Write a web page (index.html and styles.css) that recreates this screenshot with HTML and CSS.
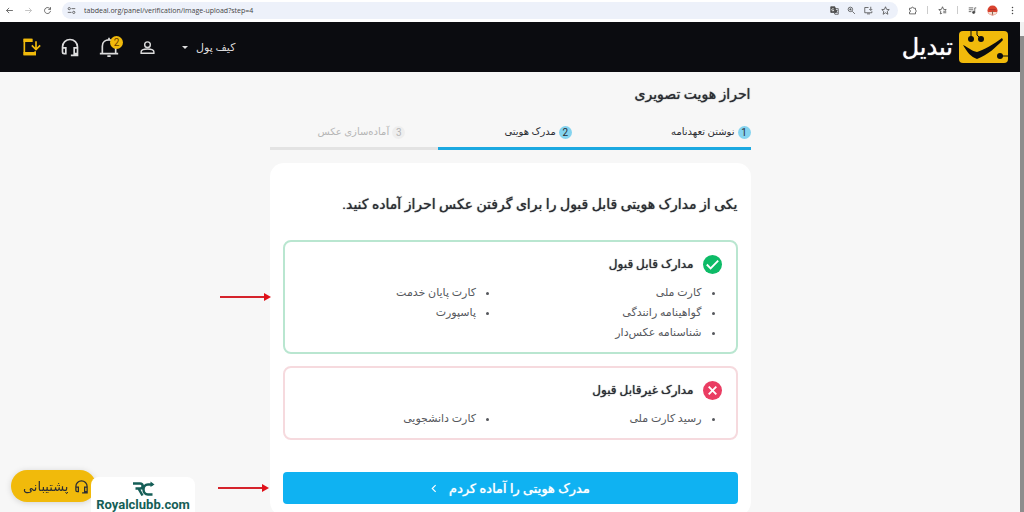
FILE: index.html
```html
<!DOCTYPE html>
<html lang="fa">
<head>
    <meta charset="UTF-8">
    <meta name="viewport" content="width=device-width, initial-scale=1.0">
    <title>احراز هویت تصویری</title>
    <link rel="stylesheet" href="styles.css">
</head>
<body>
    <div class="browser-bar">
        <button class="tool" aria-label="Back"><svg viewBox="0 0 24 24"><path d="M21 12H4M11 5l-7 7 7 7"/></svg></button>
        <button class="tool tool-off" aria-label="Forward"><svg viewBox="0 0 24 24"><path d="M3 12h17M13 5l7 7-7 7"/></svg></button>
        <button class="tool" aria-label="Reload"><svg viewBox="0 0 24 24"><path d="M20 13a8 8 0 1 1-2.500-6.800L20 8.500M20 3v6h-6"/></svg></button>
        <div class="address">
            <svg class="site-icon" viewBox="0 0 24 24"><circle cx="6" cy="7" r="3"/><path d="M12 7h10M2 17h10"/><circle cx="18" cy="17" r="3"/></svg>
            <input class="url" type="text" aria-label="Address" value="tabdeal.org/panel/verification/image-upload?step=4">
            <button class="tool" aria-label="Translate"><svg viewBox="0 0 24 24"><path d="M2 2h11l4 15H2z" fill="#555"/><path d="M12 7h10v15h-9l-2-5M15 12h5M17.500 11v2c0 3-2 5-3 5M16 14l4 4"/><path d="M10 8a3 3 0 1 0 0 4H8" stroke="#fff"/></svg></button>
            <button class="tool" aria-label="Zoom"><svg viewBox="0 0 24 24"><circle cx="9" cy="9" r="6"/><path d="M14 14l7 7M6 9h6M9 6v6"/></svg></button>
            <button class="tool" aria-label="Install"><svg viewBox="0 0 24 24"><path d="M12 4H2v14h19v-4M8 21h8M18 2v9M14 8l4 4 4-4"/></svg></button>
            <button class="tool" aria-label="Bookmark"><svg viewBox="0 0 24 24"><path d="M12 2l3 7 7 .6-5.300 4.700L18.300 22 12 18l-6.300 4 1.600-7.700L2 9.600 9 9z"/></svg></button>
        </div>
        <button class="tool" aria-label="Extensions"><svg viewBox="0 0 24 24"><path d="M4 6h5c0-4 6-4 6 0h5v5c3 0 3 5 0 5v5H4v-5c4 0 4-5 0-5z"/></svg></button>
        <span class="divider"></span>
        <button class="tool" aria-label="Favourites"><svg viewBox="0 0 24 24"><path d="M11 19l-5 2 1.500-7L2 9.600 9 9l3-7 3 7 7 .6-3 2.400M14 14h8M14 18h8"/></svg></button>
        <span class="divider"></span>
        <button class="tool" aria-label="Media"><svg viewBox="0 0 24 24"><path d="M2 5h12M2 10h12M2 15h7M18 17V5h4"/><circle cx="15" cy="17" r="3" fill="#444"/></svg></button>
        <button class="tool" aria-label="Profile"><svg class="avatar" viewBox="0 0 24 24"><circle cx="12" cy="12" r="11" fill="#d9432f" stroke="none"/><path d="M2 15h20l-4 6H6z" fill="#f3ddd0" stroke="none"/><path d="M5 10h14" stroke="#b02a22"/><path d="M12 13v8" stroke="#8a5b45"/></svg></button>
        <button class="tool" aria-label="Menu"><svg viewBox="0 0 24 24"><g fill="#444" stroke="none"><circle cx="12" cy="4" r="2"/><circle cx="12" cy="12" r="2"/><circle cx="12" cy="20" r="2"/></g></svg></button>
    </div>

    <div class="viewport">
        <div class="page" dir="rtl">
            <header class="navbar">
                <a class="logo" href="#">
                    <svg class="logo-mark" viewBox="0 0 49 32">
                        <rect width="49" height="32" rx="4" fill="#f1ba0b"/>
                        <g fill="#0b0c10">
                            <circle cx="12" cy="8" r="3"/>
                            <circle cx="22" cy="8" r="3"/>
                            <circle cx="41" cy="25" r="3"/>
                            <path d="M4 14c6 3 9 6 14 7 7-2 17-8 25-14l1 2C37 16 29 24 18 28 12 26 8 21 4 14z"/>
                        </g>
                        <path d="M12 8V0M22 8l-4-4V0M41 25h8" fill="none" stroke="#0b0c10"/>
                    </svg>
                    <span class="logo-text">تبدیل</span>
                </a>
                <nav class="nav-actions">
                    <button class="wallet">کیف پول <span class="caret"></span></button>
                    <a class="nav-icon" href="#" aria-label="حساب کاربری"><svg class="small" viewBox="0 0 24 24"><circle cx="12" cy="8" r="4"/><path d="M3 20v-2c0-3 6-4 9-4s9 1 9 4v2z"/></svg></a>
                    <a class="nav-icon" href="#" aria-label="اعلان‌ها"><svg viewBox="0 0 24 24"><path d="M1 20h22M4 20v-9c0-10 16-10 16 0v9M12 1v3M10 23h4"/></svg><span class="badge">2</span></a>
                    <a class="nav-icon" href="#" aria-label="پشتیبانی"><svg viewBox="0 0 24 24"><path d="M3 18v-6a9 9 0 0 1 18 0v10h-8M3 13h4v7H5a2 2 0 0 1-2-2zM21 13h-4v7h4"/></svg></a>
                    <a class="nav-icon nav-app" href="#" aria-label="دریافت اپلیکیشن"><svg viewBox="0 0 24 24"><path d="M13 3H4v18h13v-4"/><path d="M3 2h11v4H3zM3 18h15v4H3z" fill="#f1ba0b" stroke="none"/><path d="M18 5v9M13 10l5 5 5-5"/></svg></a>
                </nav>
            </header>

            <main class="content">
                <h1>احراز هویت تصویری</h1>
                <ol class="steps">
                    <li><span class="step-number">1</span>نوشتن تعهدنامه</li>
                    <li><span class="step-number">2</span>مدرک هویتی</li>
                    <li class="pending"><span class="step-number">3</span>آماده‌سازی عکس</li>
                </ol>
                <div class="progress"><div class="progress-fill"></div></div>

                <section class="card">
                    <h2>یکی از مدارک هویتی قابل قبول را برای گرفتن عکس احراز آماده کنید.</h2>

                    <div class="documents accepted">
                        <svg class="arrow" viewBox="0 0 51 8"><path d="M0 4h45" stroke="#d5232b" stroke-width="2"/><path d="M44 0l7 4-7 4z" fill="#e01019"/></svg>
                        <h3><svg class="status" viewBox="0 0 20 20"><circle cx="10" cy="10" r="10" fill="#0dbb67"/><path d="M4 10l4 4 8-8" fill="none" stroke="#fff" stroke-width="2"/></svg>مدارک قابل قبول</h3>
                        <div class="columns">
                            <ul>
                                <li>کارت ملی</li>
                                <li>گواهینامه رانندگی</li>
                                <li>شناسنامه عکس‌دار</li>
                            </ul>
                            <ul>
                                <li>کارت پایان خدمت</li>
                                <li>پاسپورت</li>
                            </ul>
                        </div>
                    </div>

                    <div class="documents rejected">
                        <h3><svg class="status" viewBox="0 0 20 20"><circle cx="10" cy="10" r="10" fill="#ea3d63"/><path d="M6 6l8 8M14 6l-8 8" fill="none" stroke="#fff" stroke-width="2"/></svg>مدارک غیرقابل قبول</h3>
                        <div class="columns">
                            <ul>
                                <li>رسید کارت ملی</li>
                            </ul>
                            <ul>
                                <li>کارت دانشجویی</li>
                            </ul>
                        </div>
                    </div>

                    <div class="submit-row">
                        <svg class="arrow" viewBox="0 0 51 8"><path d="M0 4h45" stroke="#d5232b" stroke-width="2"/><path d="M44 0l7 4-7 4z" fill="#e01019"/></svg>
                        <button class="submit">مدرک هویتی را آماده کردم <svg viewBox="0 0 8 8"><path d="M5 1L2 4l3 3" fill="none" stroke="#fff"/></svg></button>
                    </div>
                </section>
            </main>
        </div>
        <div class="scrollbar"><div class="scroll-thumb"></div></div>
    </div>

    <button class="support" dir="rtl">
        <svg viewBox="0 0 24 24"><path d="M3 18v-6a9 9 0 0 1 18 0v10h-8M3 13h4v7H5a2 2 0 0 1-2-2zM21 13h-4v7h4"/></svg>
        پشتیبانی
    </button>
    <div class="watermark">
        <svg viewBox="0 0 44 32"><path d="M1 5h14c7 0 7 10 0 10H6M12 15l8 14M40 7h-9c-12 0-12 20 0 20h9" fill="none" stroke="#155e57" stroke-width="5"/><path d="M36 1l8 6-8 5z" fill="#155e57"/></svg>
        <span>Royalclubb.com</span>
    </div>
</body>
</html>
```
FILE: styles.css
```css
* {
    box-sizing: border-box;
}

body {
    display: flex;
    flex-direction: column;
    height: 100vh;
    margin: 0;
    overflow: hidden;
    background-color: #f7f7f7;
    color: #2b2d33;
    font-family: Roboto, "DejaVu Sans", sans-serif;
    font-size: 10px;
}

button {
    border: none;
    background: none;
    padding: 0;
    color: inherit;
    font-family: inherit;
    cursor: pointer;
}

a {
    color: inherit;
    text-decoration: none;
}

h1, h2, h3, ul, ol {
    margin: 0;
    padding: 0;
}

/* Medium weight look for the Persian headings */
h1, h2, h3, .submit, .logo-text {
    font-weight: 400;
    text-shadow: 0 0 1px currentColor;
}

/* Browser toolbar */
.browser-bar {
    display: flex;
    flex: none;
    align-items: center;
    gap: 10px;
    height: 22px;
    padding: 0 7px 2px 5px;
    background-color: #ffffff;
}

.tool {
    display: flex;
    flex: none;
}

.tool svg,
.site-icon {
    width: 9px;
    height: 9px;
    fill: none;
    stroke: #444444;
    stroke-width: 2;
}

.tool-off {
    opacity: 0.4;
}

.tool .avatar {
    width: 11px;
    height: 11px;
}

.address {
    display: flex;
    flex: 1;
    align-items: center;
    gap: 8px;
    height: 17px;
    padding: 0 8px 0 5px;
    border-radius: 9px;
    background-color: #edf1fa;
}

.url {
    flex: 1;
    min-width: 0;
    padding: 0;
    border: none;
    background: none;
    color: #444444;
    font-family: "Open Sans", sans-serif;
    font-size: 7px;
    font-weight: 500;
}

.divider {
    width: 1px;
    height: 8px;
    background-color: #cccccc;
}

/* Page and scrollbar */
.viewport {
    display: flex;
    flex: 1;
    min-height: 0;
}

.page {
    flex: 1;
    overflow: hidden;
}

.scrollbar {
    width: 4px;
    padding-top: 14px;
    background-color: #f1f1f1;
}

.scroll-thumb {
    height: 100%;
    background-color: #8d8d8d;
}

/* Header */
.navbar {
    display: flex;
    justify-content: space-between;
    align-items: center;
    height: 50px;
    padding: 0 12px 0 20px;
    background-color: #0b0c10;
    color: #dddddd;
}

.logo {
    display: flex;
    align-items: center;
    gap: 6px;
}

.logo-mark {
    width: 49px;
    height: 32px;
}

.logo-text {
    color: #ffffff;
    font-size: 24px;
    line-height: 32px;
}

.nav-actions {
    display: flex;
    align-items: center;
    gap: 18px;
}

.wallet {
    display: flex;
    align-items: center;
    gap: 8px;
    margin-left: 6px;
    font-size: 11px;
}

.caret {
    border: 3px solid transparent;
    border-top-color: #dddddd;
    border-bottom: none;
}

.nav-icon {
    display: flex;
    justify-content: center;
    align-items: center;
    position: relative;
    width: 21px;
    height: 20px;
}

.nav-icon svg,
.support svg {
    width: 20px;
    height: 20px;
    fill: none;
    stroke: currentColor;
    stroke-width: 2;
}

.nav-icon .small {
    width: 17px;
    height: 17px;
}

.nav-app {
    color: #f1ba0b;
}

.badge {
    position: absolute;
    top: -1px;
    right: -4px;
    width: 13px;
    height: 13px;
    border-radius: 50%;
    background-color: #f1ba0b;
    color: #6b3c00;
    font-size: 10px;
    line-height: 13px;
    text-align: center;
}

/* Content */
.content {
    width: 90%;
    max-width: 481px;
    margin: 0 auto;
    padding-top: 10px;
}

h1 {
    font-size: 14px;
    line-height: 24px;
}

.steps {
    display: flex;
    justify-content: space-between;
    margin-top: 18px;
    padding-left: 48px;
    list-style: none;
    font-size: 10px;
    line-height: 16px;
}

.steps li {
    display: flex;
    align-items: center;
    gap: 3px;
}

.step-number {
    width: 13px;
    height: 13px;
    border-radius: 50%;
    background-color: #84d3ef;
    font-size: 10px;
    line-height: 13px;
    text-align: center;
}

.steps .pending {
    color: #b5b5b5;
}

.pending .step-number {
    background-color: #eeeeee;
}

.progress {
    height: 3px;
    margin-top: 7px;
    background-color: #e3e3e3;
}

.progress-fill {
    width: 65%;
    height: 100%;
    background-color: #1ca9e1;
}

.card {
    margin-top: 13px;
    padding: 29px 13px 12px;
    border-radius: 14px;
    background-color: #ffffff;
}

h2 {
    font-size: 14px;
    line-height: 24px;
}

.documents {
    position: relative;
    margin-top: 12px;
    padding: 12px 14px 9px;
    border: 2px solid #b9e6d0;
    border-radius: 8px;
}

.accepted {
    margin-top: 24px;
}

.rejected {
    border-color: #f6dade;
}

h3 {
    display: flex;
    align-items: center;
    gap: 9px;
    font-size: 12px;
    line-height: 20px;
}

.status {
    width: 19px;
    height: 19px;
}

.columns {
    display: grid;
    grid-template-columns: 1fr 1fr;
    margin: 9px -14px 0;
    color: #55575c;
    font-size: 11px;
    line-height: 20px;
}

.columns ul {
    padding-right: 34px;
}

.submit-row {
    position: relative;
    margin-top: 32px;
}

.submit {
    display: flex;
    justify-content: center;
    align-items: center;
    gap: 10px;
    width: 100%;
    height: 32px;
    border-radius: 4px;
    background-color: #0fb2f2;
    color: #ffffff;
    font-size: 13px;
}

.submit svg {
    width: 9px;
    height: 9px;
}

.arrow {
    position: absolute;
    top: 50%;
    right: calc(100% + 14px);
    width: 51px;
    height: 8px;
    margin-top: -4px;
}

/* Floating items */
.support {
    display: flex;
    align-items: center;
    gap: 6px;
    position: fixed;
    bottom: 10px;
    left: 11px;
    height: 32px;
    padding: 0 7px 0 12px;
    border-radius: 16px;
    background-color: #f1ba0b;
    box-shadow: 0 1px 6px rgba(0, 0, 0, 0.15);
    color: #2b2d33;
    font-size: 13px;
}

.support svg {
    width: 15px;
    height: 15px;
}

.watermark {
    display: flex;
    flex-direction: column;
    align-items: center;
    position: fixed;
    bottom: 0;
    left: 91px;
    width: 104px;
    height: 35px;
    padding-top: 4px;
    border-radius: 8px 8px 0 0;
    background-color: #ffffff;
    color: #155e57;
    font-size: 13px;
    font-weight: 700;
    line-height: 15px;
}

.watermark svg {
    width: 23px;
    height: 16px;
}
```
